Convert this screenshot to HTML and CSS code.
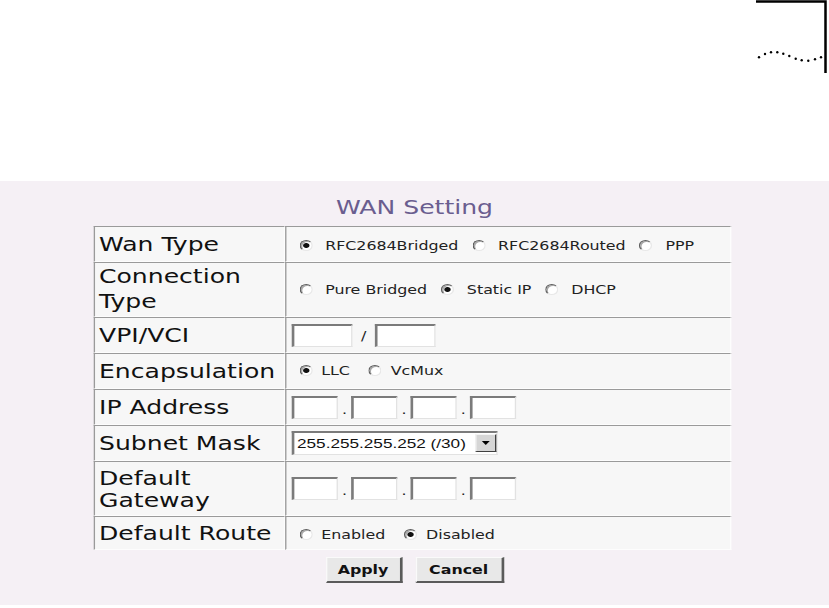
FILE: index.html
```html
<!DOCTYPE html>
<html lang="en">
<head>
<meta charset="utf-8">
<title>WAN Setting</title>
<link rel="stylesheet" href="styles.css">
</head>
<body>
<header class="top">
  <svg class="corner" width="75" height="75" viewBox="0 0 75 75" aria-hidden="true">
    <path d="M2 1.5H71.5V73" fill="none" stroke="#000" stroke-width="2.5"/>
    <g fill="#000">
      <circle cx="5" cy="57.3" r="1.2"/>
      <circle cx="11" cy="54" r="1.2"/>
      <circle cx="17" cy="52.3" r="1.2"/>
      <circle cx="23.3" cy="52.3" r="1.2"/>
      <circle cx="29.3" cy="53.7" r="1.2"/>
      <circle cx="35.3" cy="56" r="1.2"/>
      <circle cx="41.7" cy="58.7" r="1.2"/>
      <circle cx="47.7" cy="60.3" r="1.2"/>
      <circle cx="54.3" cy="60.7" r="1.2"/>
      <circle cx="61" cy="59.3" r="1.2"/>
      <circle cx="67" cy="57.3" r="1.2"/>
    </g>
  </svg>
</header>
<main class="panel">
  <div class="stage">
    <h1 class="title">WAN Setting</h1>
    <table class="form">
      <tr class="row">
        <td class="label">Wan Type</td>
        <td class="field first"><input type="radio" class="radio" name="wantype" checked> RFC2684Bridged <input type="radio" class="radio" name="wantype"> RFC2684Routed <input type="radio" class="radio" name="wantype"> PPP</td>
      </tr>
      <tr class="row tall">
        <td class="label spaced">Connection<br>Type</td>
        <td class="field"><input type="radio" class="radio" name="conntype"> Pure Bridged <input type="radio" class="radio" name="conntype" checked> Static IP <input type="radio" class="radio" name="conntype"> DHCP</td>
      </tr>
      <tr class="row">
        <td class="label">VPI/VCI</td>
        <td class="field">
          <div class="boxes">
            <input type="text" class="box wide"><span class="sep slash">/</span><input type="text" class="box wide">
          </div>
        </td>
      </tr>
      <tr class="row">
        <td class="label">Encapsulation</td>
        <td class="field"><input type="radio" class="radio tight" name="encap" checked> LLC &nbsp;<input type="radio" class="radio tight" name="encap"> VcMux</td>
      </tr>
      <tr class="row">
        <td class="label">IP Address</td>
        <td class="field">
          <div class="boxes">
            <input type="text" class="box"><span class="sep">.</span><input type="text" class="box"><span class="sep">.</span><input type="text" class="box"><span class="sep">.</span><input type="text" class="box">
          </div>
        </td>
      </tr>
      <tr class="row">
        <td class="label">Subnet Mask</td>
        <td class="field">
          <div class="select">
            <select>
              <option>255.255.255.252 (/30)</option>
            </select>
            <span class="arrow"></span>
          </div>
        </td>
      </tr>
      <tr class="row tall">
        <td class="label">Default<br>Gateway</td>
        <td class="field">
          <div class="boxes">
            <input type="text" class="box"><span class="sep">.</span><input type="text" class="box"><span class="sep">.</span><input type="text" class="box"><span class="sep">.</span><input type="text" class="box">
          </div>
        </td>
      </tr>
      <tr class="row short">
        <td class="label">Default Route</td>
        <td class="field first"><input type="radio" class="radio tight" name="route"> Enabled &nbsp;<input type="radio" class="radio tight" name="route" checked> Disabled</td>
      </tr>
    </table>
    <div class="actions">
      <button type="button" class="btn btn-apply">Apply</button>
      <button type="button" class="btn btn-cancel">Cancel</button>
    </div>
  </div>
</main>
</body>
</html>
```
FILE: styles.css
```css
* {
  box-sizing: border-box;
}

html,
body {
  margin: 0;
  padding: 0;
  background: #ffffff;
}

body {
  width: 829px;
  height: 608px;
  overflow: hidden;
  font-family: "DejaVu Sans", Verdana, sans-serif;
}

.top {
  height: 181px;
  display: flex;
  justify-content: flex-end;
  align-items: flex-start;
}

.corner {
  display: block;
}

.panel {
  height: 424px;
  background: #f5f0f5;
  padding-top: 15px;
  overflow: hidden;
}

/* the original page is shown horizontally stretched */
.stage {
  width: 628px;
  transform: scaleX(1.32);
  transform-origin: 0 0;
}

.title {
  margin: 0 0 8px;
  font-size: 19px;
  line-height: 22px;
  font-weight: normal;
  color: #6a5d8f;
  text-align: center;
}

.form {
  margin-left: 71px;
  width: 483px;
  border-collapse: separate;
  border-spacing: 0;
}

.form td {
  background: #f7f7f7;
  border-top: 1px solid #9a9a9a;
  border-left: 1px solid #9a9a9a;
  border-right: 1px solid #fdfdfd;
  border-bottom: 1px solid #fdfdfd;
  vertical-align: middle;
  padding: 0 3px;
}

.row {
  height: 36px;
}

.row.tall {
  height: 55px;
}

.row.short {
  height: 34px;
}

.label {
  width: 145px;
  font-size: 19px;
  line-height: 22px;
  color: #111;
}

.label.spaced {
  line-height: 25px;
  padding-bottom: 2px;
}

.field {
  font-size: 12px;
  color: #222;
  white-space: nowrap;
}

.form td.field.first {
  padding-top: 4px;
}

.radio {
  -webkit-appearance: none;
  appearance: none;
  width: 10px;
  height: 11px;
  margin: 0 6px 0 6.5px;
  border-radius: 50%;
  border: 1px solid;
  border-color: #5e5e5e #e8e8e8 #e8e8e8 #5e5e5e;
  box-shadow: inset 1px 1px 0 #a9a9a9;
  background: #ffffff;
  vertical-align: -1px;
}

.radio:checked {
  background: radial-gradient(circle, #111 0 2px, #ffffff 2.8px);
}

.radio.tight {
  margin-right: 3px;
}

.boxes {
  display: flex;
  align-items: flex-end;
  margin-left: 1px;
}

.box {
  width: 35px;
  height: 23px;
  margin: 0;
  padding: 0;
  border-style: solid;
  border-width: 2px 1px 1px 2px;
  border-color: #7b7b7b #e2e2e2 #e2e2e2 #7b7b7b;
  border-radius: 0;
  background: #ffffff;
  font: 12px "DejaVu Sans", Verdana, sans-serif;
}

.box.wide {
  width: 46px;
}

.sep {
  width: 10px;
  text-align: center;
  font-size: 12px;
  line-height: 12px;
  padding-bottom: 3px;
  color: #222;
}

.sep.slash {
  width: 17px;
  padding-bottom: 5px;
}

.select {
  position: relative;
  display: inline-block;
  vertical-align: middle;
  margin-left: 1px;
  width: 156px;
  height: 24px;
}

.select select {
  -webkit-appearance: none;
  appearance: none;
  display: block;
  width: 100%;
  height: 100%;
  margin: 0;
  padding: 0 0 0 2px;
  border-style: solid;
  border-width: 2px 1px 1px 2px;
  border-color: #7b7b7b #e2e2e2 #e2e2e2 #7b7b7b;
  border-radius: 0;
  background: #ffffff;
  font: 13px "Liberation Sans", Arial, sans-serif;
  color: #111;
}

.arrow {
  position: absolute;
  right: 1px;
  top: 3px;
  width: 16px;
  height: 18px;
  background: #d6d6d6;
  border: 1px solid;
  border-color: #f4f4f4 #404040 #404040 #f4f4f4;
  display: flex;
  align-items: center;
  justify-content: center;
  pointer-events: none;
}

.arrow::after {
  content: "";
  border-left: 3px solid transparent;
  border-right: 3px solid transparent;
  border-top: 4px solid #000;
}

.actions {
  display: flex;
  justify-content: center;
  gap: 10px;
  margin-top: 7px;
}

.btn {
  height: 26px;
  padding: 0;
  font: bold 12px "DejaVu Sans", Verdana, sans-serif;
  color: #111;
  background: #e8e8e8;
  border-style: solid;
  border-width: 1px 2px 2px 1px;
  border-color: #fafafa #5a5a5a #5a5a5a #fafafa;
  border-radius: 0;
}

.btn-apply {
  width: 58px;
}

.btn-cancel {
  width: 67px;
}
```
